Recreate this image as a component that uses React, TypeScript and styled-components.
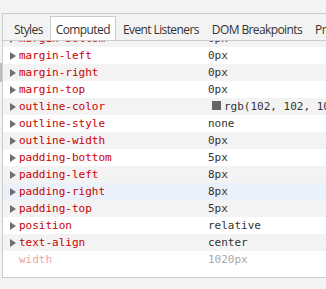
import React from 'react';
import styled, { createGlobalStyle } from 'styled-components';

const GlobalStyle = createGlobalStyle`
  html, body {
    margin: 0;
    padding: 0;
    background: #f3f3f3;
  }
`;

const Page = styled.div`
  position: relative;
  height: 289px;
  padding: 13px 0 0 2px;
  box-sizing: border-box;
  overflow: hidden;
`;

const Panel = styled.div`
  border-top: 1px solid #cccccc;
  border-left: 1px solid #cccccc;
  border-bottom: 1px solid #cccccc;
  background: #ffffff;
`;

const TabBar = styled.div`
  display: flex;
  align-items: flex-end;
  height: 26px;
  padding-left: 5px;
  background: #f3f3f3;
  border-bottom: 1px solid #cccccc;
  white-space: nowrap;
  overflow: hidden;
`;

const Tab = styled.div<{ $active?: boolean }>`
  position: relative;
  flex: none;
  height: 25px;
  margin-bottom: -1px;
  margin-right: 1px;
  padding: 1px 5px 0;
  box-sizing: border-box;
  display: flex;
  align-items: center;
  font-family: 'Open Sans', 'Noto Sans', sans-serif;
  font-size: 12px;
  letter-spacing: -0.6px;
  color: #333333;
  border: 1px solid ${({ $active }) => ($active ? '#cccccc' : 'transparent')};
  border-bottom-color: transparent;
  background: ${({ $active }) => ($active ? '#ffffff' : 'transparent')};
`;

const List = styled.div`
  height: 236px;
  overflow: hidden;
  background: #ffffff;
`;

const Rows = styled.div`
  margin-top: -11px;
`;

const Row = styled.div<{ $tone: 'white' | 'grey' | 'hover' }>`
  display: flex;
  align-items: center;
  height: 17px;
  padding-left: 7px;
  white-space: nowrap;
  overflow: hidden;
  font-family: 'DejaVu Sans Mono', 'Liberation Mono', monospace;
  font-size: 11px;
  background: ${({ $tone }) =>
    $tone === 'hover' ? '#eaf1fb' : $tone === 'grey' ? '#f3f3f3' : '#ffffff'};
`;

const Arrow = styled.span<{ $hidden?: boolean }>`
  flex: none;
  width: 0;
  height: 0;
  border-top: 4px solid transparent;
  border-bottom: 4px solid transparent;
  border-left: 6px solid ${({ $hidden }) => ($hidden ? 'transparent' : '#6e6e6e')};
  margin-right: 3px;
`;

const Name = styled.span<{ $faded?: boolean }>`
  flex: none;
  width: 189px;
  color: ${({ $faded }) => ($faded ? 'rgba(200, 0, 0, 0.4)' : '#c80000')};
`;

const Value = styled.span<{ $faded?: boolean }>`
  display: flex;
  align-items: center;
  color: ${({ $faded }) => ($faded ? '#a8a8a8' : '#333333')};
`;

const Swatch = styled.span<{ $color: string }>`
  display: inline-block;
  width: 9px;
  height: 9px;
  margin: -2px 3px 0 4px;
  background: ${({ $color }) => $color};
`;

const Handle = styled.div`
  position: absolute;
  left: 0;
  top: 63px;
  width: 2px;
  height: 19px;
  background: #bdbdbd;
`;

const tabs = ['Styles', 'Computed', 'Event Listeners', 'DOM Breakpoints', 'Properties'];

type Prop = { name: string; value: string; swatch?: string; faded?: boolean };

const props: Prop[] = [
  { name: 'margin-bottom', value: '0px' },
  { name: 'margin-left', value: '0px' },
  { name: 'margin-right', value: '0px' },
  { name: 'margin-top', value: '0px' },
  { name: 'outline-color', value: 'rgb(102, 102, 102)', swatch: 'rgb(102, 102, 102)' },
  { name: 'outline-style', value: 'none' },
  { name: 'outline-width', value: '0px' },
  { name: 'padding-bottom', value: '5px' },
  { name: 'padding-left', value: '8px' },
  { name: 'padding-right', value: '8px' },
  { name: 'padding-top', value: '5px' },
  { name: 'position', value: 'relative' },
  { name: 'text-align', value: 'center' },
  { name: 'width', value: '1020px', faded: true },
];

const HOVER_ROW = 9;

export default function App() {
  return (
    <>
      <GlobalStyle />
      <Page>
        <Handle />
        <Panel>
          <TabBar>
            {tabs.map((t) => (
              <Tab key={t} $active={t === 'Computed'}>
                {t}
              </Tab>
            ))}
          </TabBar>
          <List>
            <Rows>
              {props.map((p, i) => (
                <Row
                  key={p.name}
                  $tone={i === HOVER_ROW ? 'hover' : i % 2 === 0 ? 'grey' : 'white'}
                >
                  <Arrow $hidden={p.faded} />
                  <Name $faded={p.faded}>{p.name}</Name>
                  <Value $faded={p.faded}>
                    {p.swatch && <Swatch $color={p.swatch} />}
                    {p.value}
                  </Value>
                </Row>
              ))}
            </Rows>
          </List>
        </Panel>
      </Page>
    </>
  );
}
